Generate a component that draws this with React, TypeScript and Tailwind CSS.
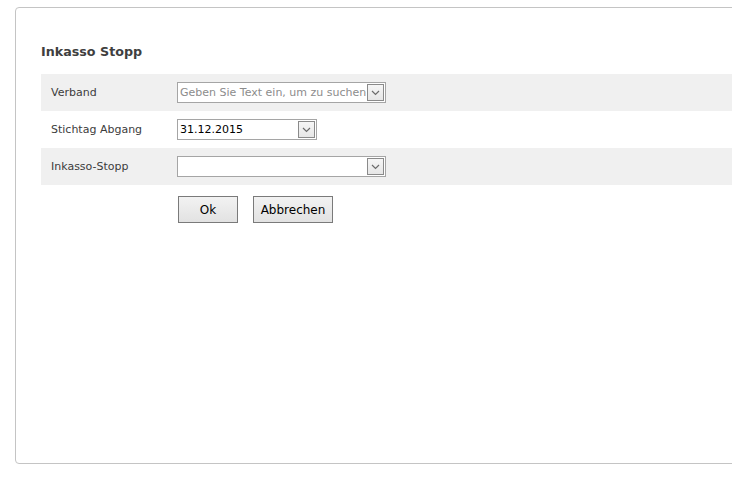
import { ReactNode } from "react";

function Chevron() {
  return (
    <svg width="9" height="6" viewBox="0 0 9 6" className="block">
      <path d="M1 1 L4.5 4.5 L8 1" fill="none" stroke="#6b6b6b" strokeWidth="1.2" />
    </svg>
  );
}

function DropButton() {
  return (
    <span className="flex h-[17px] w-[17px] shrink-0 items-center justify-center border border-[#8a8a8a] bg-gradient-to-b from-[#f6f6f6] to-[#e6e6e6]">
      <Chevron />
    </span>
  );
}

interface ComboProps {
  value?: string;
  placeholder?: string;
  width: string;
}

function Combo({ value, placeholder, width }: ComboProps) {
  return (
    <div className={`flex h-[21px] items-center border border-[#a5a5a5] bg-white pl-[2px] pr-px ${width}`}>
      <span className={`flex-1 overflow-hidden whitespace-nowrap text-[11px] leading-[19px] ${value ? "text-black" : "text-[#8c8c8c]"}`}>
        {value ?? placeholder}
      </span>
      <DropButton />
    </div>
  );
}

function Row({ label, shaded, children }: { label: string; shaded?: boolean; children: ReactNode }) {
  return (
    <div className={`flex h-[37px] items-center ${shaded ? "bg-[#f0f0f0]" : "bg-white"}`}>
      <div className="w-[136px] pl-[10px] pt-[2px] text-[11px] text-[#3c3c3c]">{label}</div>
      {children}
    </div>
  );
}

function Btn({ children, width }: { children: ReactNode; width: string }) {
  return (
    <button className={`h-[27px] border border-[#7a7a7a] bg-gradient-to-b from-[#f2f2f2] to-[#e2e2e2] text-[12px] text-black ${width}`}>
      {children}
    </button>
  );
}

export default function App() {
  return (
    <div className="h-[483px] w-[732px] overflow-hidden bg-white pl-[15px] pt-[7px] font-['DejaVu_Sans',Verdana,sans-serif]">
      <div className="h-[457px] w-[760px] rounded-[4px] border border-[#c4c4c4] pl-[25px] pt-[35px]">
        <h1 className="mb-[13px] text-[12.7px] font-bold leading-[18px] text-[#3f3f3f]">Inkasso Stopp</h1>
        <div>
          <Row label="Verband" shaded>
            <Combo placeholder="Geben Sie Text ein, um zu suchen" width="w-[209px]" />
          </Row>
          <Row label="Stichtag Abgang">
            <Combo value="31.12.2015" width="w-[140px]" />
          </Row>
          <Row label="Inkasso-Stopp" shaded>
            <Combo value="" width="w-[209px]" />
          </Row>
        </div>
        <div className="mt-[11px] flex gap-[15px] pl-[137px]">
          <Btn width="w-[60px]">Ok</Btn>
          <Btn width="w-[80px]">Abbrechen</Btn>
        </div>
      </div>
    </div>
  );
}
